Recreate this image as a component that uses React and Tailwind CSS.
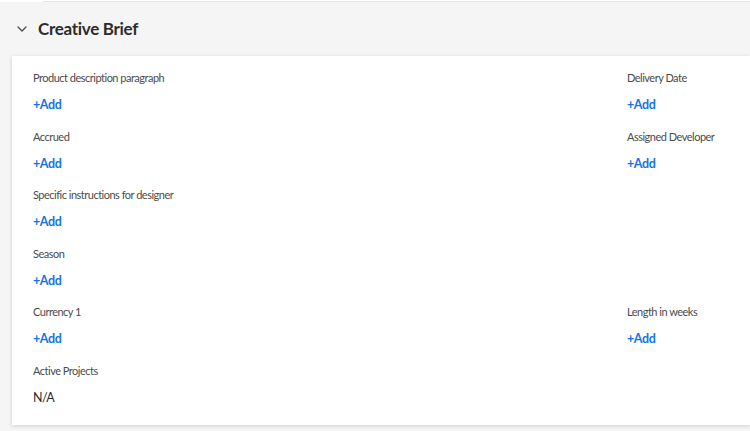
import React from "react";

const F = { fontFamily: "Lato, 'Noto Sans', sans-serif" };

function Field({ label, value }) {
  return (
    <div className="h-[58.5px]">
      <div className="text-[11px] leading-4 tracking-[-0.5px] text-[#4b4b4b]">{label}</div>
      {value ? (
        <div className="mt-[10px] text-[12.5px] leading-[18px] tracking-[-0.6px] text-[#2c2c2c]">{value}</div>
      ) : (
        <div className="mt-[10px] text-[12.5px] leading-[18px] tracking-[-0.4px] font-bold text-[#1473e6]">+Add</div>
      )}
    </div>
  );
}

export default function App() {
  return (
    <div className="w-[750px] h-[431px] overflow-hidden bg-[#f5f5f5]" style={F}>
      <div className="flex h-[2px]">
        <div className="w-[43px] bg-white" />
        <div className="flex-1 bg-white border-b border-[#e3e3e3]" />
      </div>
      <div className="flex items-center h-[54px] pl-[17px]">
        <svg width="10" height="10" viewBox="0 0 10 10" className="text-[#4b4b4b]">
          <path d="M1 3 L5 7 L9 3" fill="none" stroke="currentColor" strokeWidth="1.3" strokeLinecap="round" strokeLinejoin="round" />
        </svg>
        <div className="ml-[11px] text-[17px] font-bold tracking-[-0.3px] text-[#2c2c2c] leading-6">Creative Brief</div>
      </div>
      <div className="ml-[12px] bg-white shadow-[0_1px_4px_rgba(0,0,0,0.16)] pt-[14px] pb-[4px] pl-[21px]">
        <div className="grid grid-cols-[594px_1fr]">
          <Field label="Product description paragraph" />
          <Field label="Delivery Date" />
          <Field label="Accrued" />
          <Field label="Assigned Developer" />
          <Field label="Specific instructions for designer" />
          <div />
          <Field label="Season" />
          <div />
          <Field label="Currency 1" />
          <Field label="Length in weeks" />
          <Field label="Active Projects" value="N/A" />
          <div />
        </div>
      </div>
    </div>
  );
}
